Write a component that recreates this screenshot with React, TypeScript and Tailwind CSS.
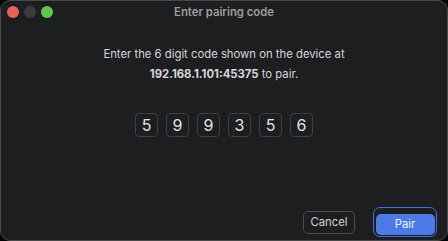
import React from "react";

export default function App() {
  const digits = ["5", "9", "9", "3", "5", "6"];
  return (
    <div className="w-[448px] h-[241px] bg-black" style={{ fontFamily: "Inter, 'Liberation Sans', sans-serif" }}>
      <div className="w-full h-full rounded-[10px] border border-[#48494b] bg-[#1d1e20] flex flex-col overflow-hidden">
        <div className="relative h-[22px] flex items-center justify-center">
          <div className="absolute left-[6px] top-[5px] flex gap-[5px]">
            <span className="w-[12px] h-[12px] rounded-full bg-[#ec5f57]" />
            <span className="w-[12px] h-[12px] rounded-full bg-[#3a3b3d]" />
            <span className="w-[12px] h-[12px] rounded-full bg-[#5fc84b]" />
          </div>
          <span className="text-[11.3px] font-semibold text-[#9c9c9e] mt-[1px]">Enter pairing code</span>
        </div>
        <div className="flex flex-col items-center mt-[21px] text-[11.3px] leading-[20px] text-[#d6d6d8]">
          <p>Enter the 6 digit code shown on the device at</p>
          <p>
            <span className="font-bold">192.168.1.101:45375</span> to pair.
          </p>
        </div>
        <div className="flex justify-center gap-[8px] mt-[29px]">
          {digits.map((d, i) => (
            <div
              key={i}
              className="w-[23px] h-[24px] rounded-[4px] border border-[#3e3f42] flex items-center justify-center text-[16px] text-[#e2e2e4]"
            >
              {d}
            </div>
          ))}
        </div>
        <div className="flex-1" />
        <div className="flex justify-end items-center gap-[18px] pr-[10px] pb-[3px]">
          <button className="w-[52px] h-[23px] rounded-[5px] border border-[#4a4b4e] text-[11.3px] text-[#d2d2d4]">
            Cancel
          </button>
          <div className="rounded-[7px] border-[1.5px] border-[#3e6fe0] p-[1.5px]">
            <button className="w-[59px] h-[21px] rounded-[5px] bg-[#4c7ae8] text-[11.3px] text-[#eef2fb]">
              Pair
            </button>
          </div>
        </div>
      </div>
    </div>
  );
}
